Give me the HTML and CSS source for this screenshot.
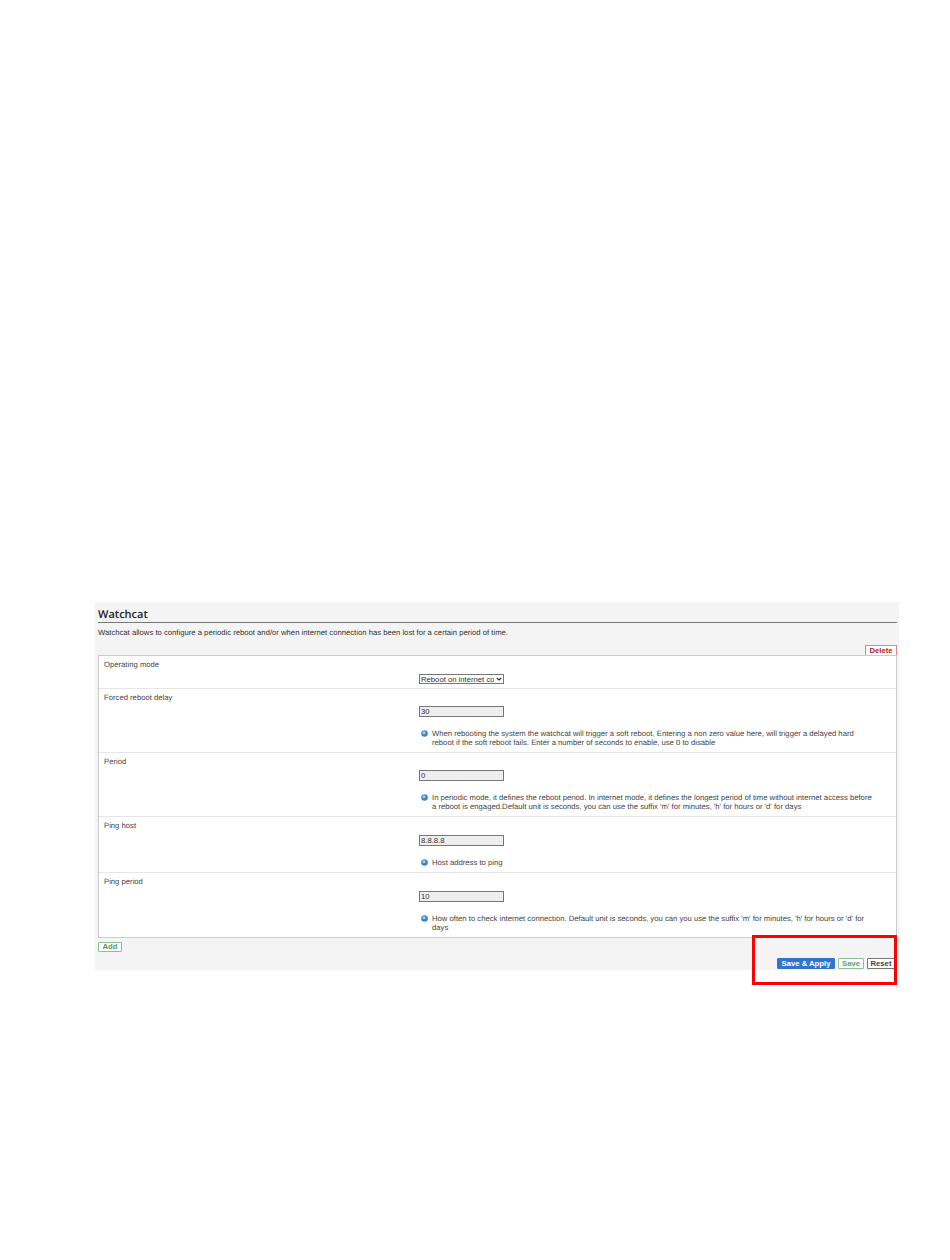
FILE: index.html
```html
<!DOCTYPE html>
<html lang="en">
<head>
<meta charset="utf-8">
<title>Watchcat</title>
<link rel="stylesheet" href="styles.css">
</head>
<body>
<main class="panel">
  <h2 class="title">Watchcat</h2>
  <p class="intro">Watchcat allows to configure a periodic reboot and/or when internet connection has been lost for a certain period of time.</p>
  <div class="delete-row"><button class="btn btn-delete">Delete</button></div>
  <div class="table">
    <section class="row row-mode">
      <div class="label">Operating mode</div>
      <div class="field">
        <div class="select-wrap">
          <select class="select"><option>Reboot on internet connection lost</option></select>
          <svg class="chevron" viewBox="0 0 6 4"><path d="M0.7 0.8 L3 3 L5.3 0.8" fill="none" stroke="#222" stroke-width="1.1"/></svg>
        </div>
      </div>
    </section>
    <section class="row row-two">
      <div class="label">Forced reboot delay</div>
      <div class="field">
        <input class="input" value="30">
        <div class="help"><svg class="info" viewBox="0 0 8 8"><circle cx="4" cy="4" r="3.8" fill="#3b86c8"/><circle cx="3.4" cy="3" r="1.8" fill="#9cc8ea"/></svg><span>When rebooting the system the watchcat will trigger a soft reboot, Entering a non zero value here, will trigger a delayed hard reboot if the soft reboot fails. Enter a number of seconds to enable, use 0 to disable</span></div>
      </div>
    </section>
    <section class="row row-two">
      <div class="label">Period</div>
      <div class="field">
        <input class="input" value="0">
        <div class="help"><svg class="info" viewBox="0 0 8 8"><circle cx="4" cy="4" r="3.8" fill="#3b86c8"/><circle cx="3.4" cy="3" r="1.8" fill="#9cc8ea"/></svg><span>In periodic mode, it defines the reboot period. In internet mode, it defines the longest period of time without internet access before a reboot is engaged.Default unit is seconds, you can use the suffix 'm' for minutes, 'h' for hours or 'd' for days</span></div>
      </div>
    </section>
    <section class="row row-one">
      <div class="label">Ping host</div>
      <div class="field">
        <input class="input" value="8.8.8.8">
        <div class="help"><svg class="info" viewBox="0 0 8 8"><circle cx="4" cy="4" r="3.8" fill="#3b86c8"/><circle cx="3.4" cy="3" r="1.8" fill="#9cc8ea"/></svg><span>Host address to ping</span></div>
      </div>
    </section>
    <section class="row row-two last">
      <div class="label">Ping period</div>
      <div class="field">
        <input class="input" value="10">
        <div class="help"><svg class="info" viewBox="0 0 8 8"><circle cx="4" cy="4" r="3.8" fill="#3b86c8"/><circle cx="3.4" cy="3" r="1.8" fill="#9cc8ea"/></svg><span>How often to check internet connection. Default unit is seconds, you can you use the suffix 'm' for minutes, 'h' for hours or 'd' for days</span></div>
      </div>
    </section>
  </div>
  <div class="add-row"><button class="btn btn-add">Add</button></div>
  <div class="actions">
    <button class="btn btn-apply">Save &amp; Apply</button>
    <button class="btn btn-save">Save</button>
    <button class="btn btn-reset">Reset</button>
  </div>
  <div class="highlight"></div>
</main>
</body>
</html>
```
FILE: styles.css
```css
* { box-sizing: border-box; }
html, body { margin: 0; padding: 0; background: #fff; }
body {
  padding: 602px 0 0 95px;
  font-family: "Liberation Sans", Arial, sans-serif;
  font-size: 7.7px;
  color: #404040;
  height: 1260px;
  overflow: hidden;
  text-rendering: geometricPrecision;
}
.panel {
  position: relative;
  width: 804px;
  height: 368px;
  background: #f4f4f4;
  padding: 0 2px 0 3px;
}
.title {
  margin: 0;
  height: 21px;
  padding-top: 6px;
  font-family: "Open Sans", sans-serif;
  font-weight: 600;
  font-size: 11px;
  line-height: 14px;
  color: #222;
  border-bottom: 1px solid #777;
}
.intro {
  margin: 0;
  height: 22px;
  padding-top: 5px;
  line-height: 10px;
  color: #333;
}
.delete-row {
  display: flex;
  justify-content: flex-end;
  height: 10px;
}
.table {
  background: #fff;
  border: 1px solid #ccc;
  height: 283px;
}
.row {
  display: grid;
  grid-template-columns: 315px 1fr;
  border-bottom: 1px solid #e6e6e6;
  padding: 4px 0 0 5px;
}
.row.last { border-bottom: 0; }
.row-mode { height: 33px; }
.row-two { height: 64px; }
.row-one { height: 56px; }
.label { line-height: 10px; color: #444; }
.field { padding-top: 13px; display: flex; flex-direction: column; align-items: flex-start; }
.row-one .field, .row-two.last .field { padding-top: 14px; }
.row-mode .field { padding-top: 14px; }
.select-wrap { position: relative; width: 85px; height: 10px; }
.select, .input {
  display: block;
  width: 85px;
  height: 11px;
  margin: 0;
  padding: 0 1px;
  font-family: inherit;
  font-size: 7.7px;
  line-height: 9px;
  color: #333;
  border: 1px solid #777;
  border-radius: 0;
  background: #eee;
  outline: none;
}
.select {
  height: 10px;
  padding: 0 9px 0 1px;
  background: #fff;
  appearance: none;
  -webkit-appearance: none;
}
.chevron {
  position: absolute;
  right: 2px;
  top: 3px;
  width: 6px;
  height: 4px;
}
.help {
  display: flex;
  gap: 4px;
  width: 457px;
  margin-top: 12px;
  line-height: 9px;
  color: #444;
  padding-left: 2px;
}
.info { flex: none; width: 7px; height: 7px; margin-top: 1px; }
.btn {
  margin: 0;
  padding: 0;
  height: 10px;
  font-family: "Liberation Sans", Arial, sans-serif;
  font-size: 7.7px;
  font-weight: 700;
  line-height: 8px;
  background: #fff;
  border: 1px solid #888;
  border-radius: 1px;
}
.btn-delete { width: 32px; color: #b3202a; border-color: #d9868c; border-bottom: 0; border-radius: 0; }
.add-row { padding-top: 4px; height: 18px; }
.btn-add { width: 24px; color: #4f9a5b; border-color: #8fbf97; }
.actions {
  display: flex;
  justify-content: flex-end;
  gap: 3px;
  padding: 2px 2px 0 0;
}
.actions .btn { height: 11px; }
.btn-apply { width: 58px; color: #fff; background: #2f74d0; border-color: #2f74d0; }
.btn-save { width: 26px; color: #5fa36b; border-color: #8fbf97; }
.btn-reset { width: 28px; color: #444; border-color: #777; }
.highlight {
  position: absolute;
  left: 657px;
  top: 333px;
  width: 145px;
  height: 50px;
  border: 3px solid #f00;
  pointer-events: none;
}
```
